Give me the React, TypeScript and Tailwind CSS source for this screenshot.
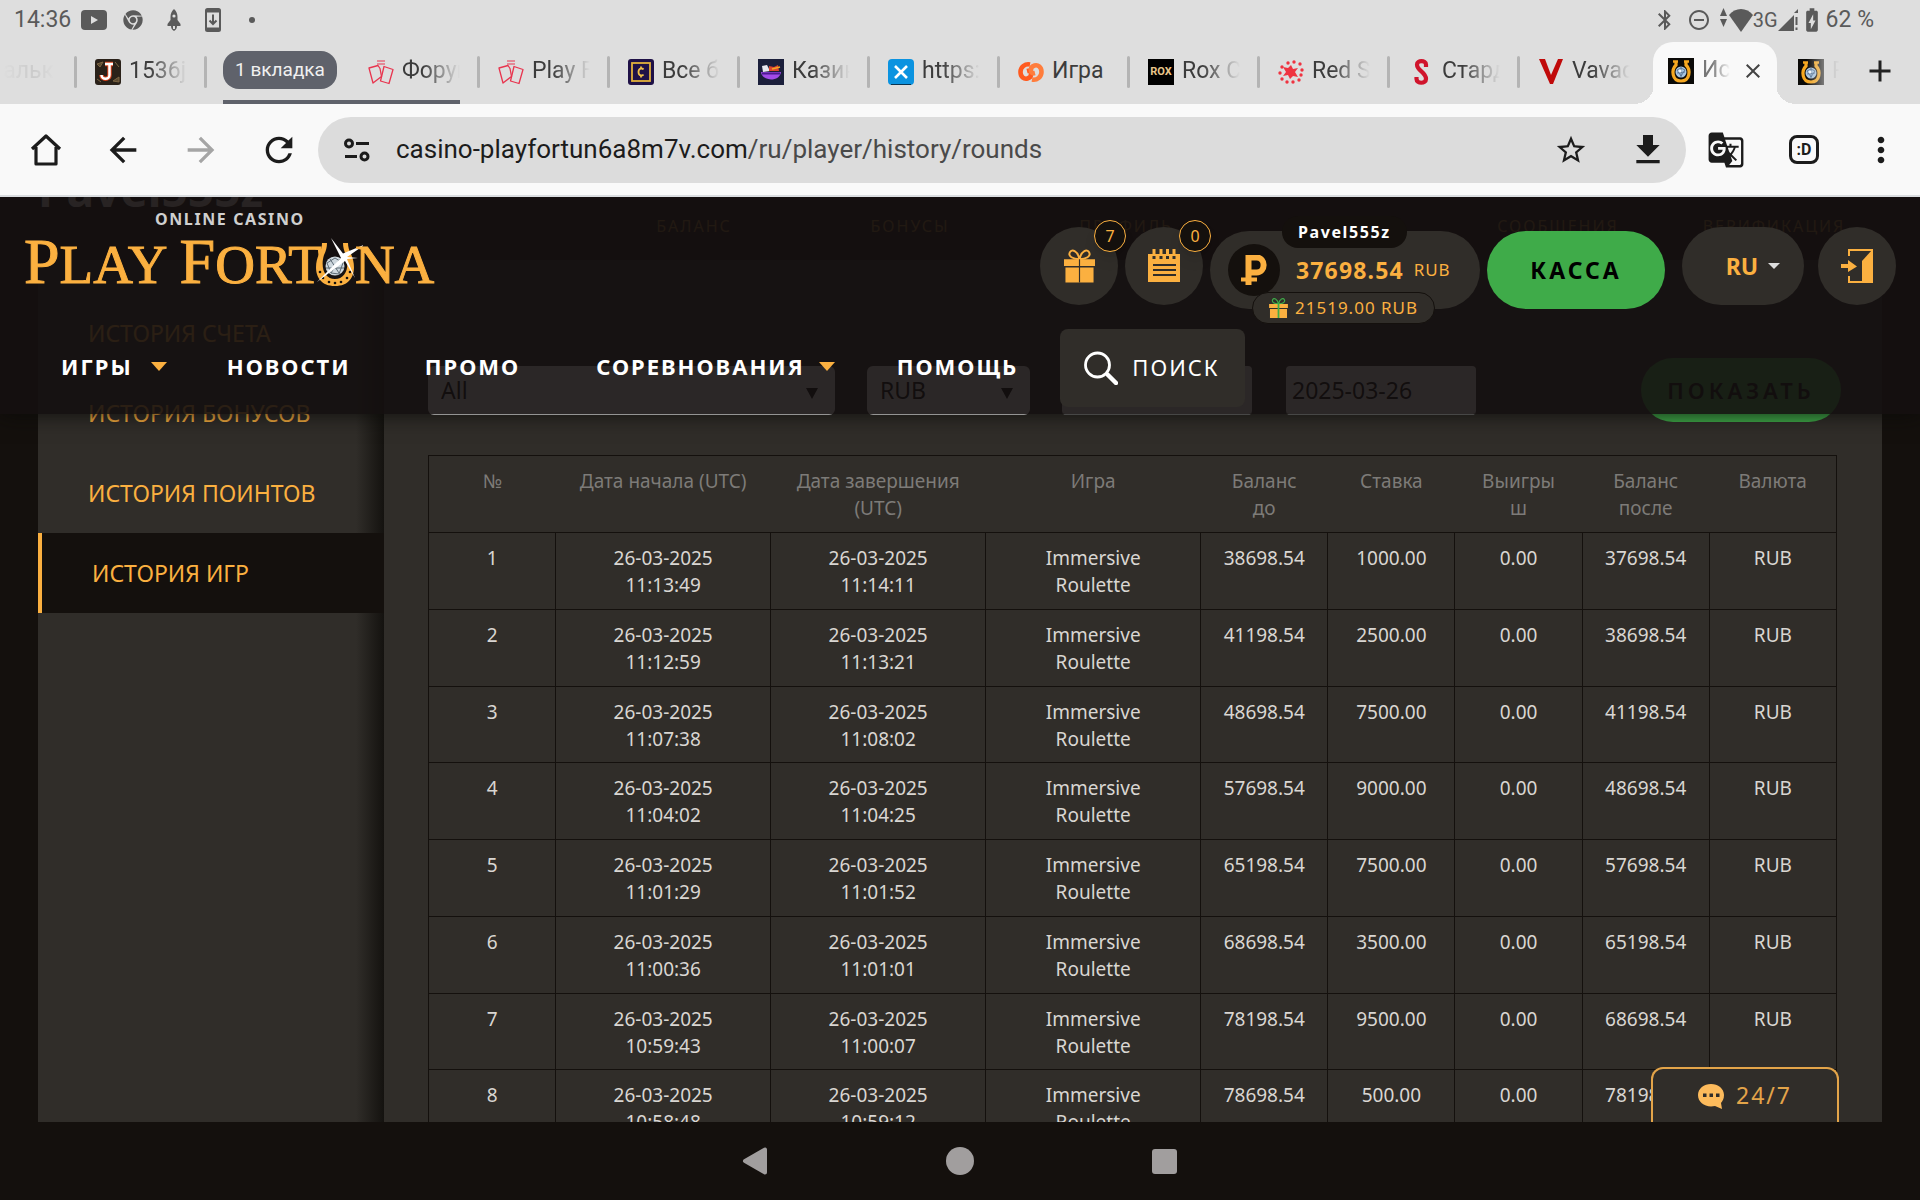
import React from "react";
import {
  MdAdd,
  MdArrowBack,
  MdArrowForward,
  MdBatteryChargingFull,
  MdBluetooth,
  MdClose,
  MdDownload,
  MdGTranslate,
  MdMoreVert,
  MdRefresh,
  MdRemoveCircleOutline,
  MdStarBorder,
} from "react-icons/md";
import { FaChrome } from "react-icons/fa";

/* ---------- Status bar ---------- */

function StatusBar() {
  return (
    <div className="flex h-10 shrink-0 items-center justify-between pl-3.5 pr-[46px] text-[23px] text-[#5a5a5a]">
      <div className="flex items-center">
        <span>14:36</span>
        <svg viewBox="0 0 26 20" className="ml-2.5 h-5 w-[26px]">
          <rect width="26" height="20" rx="4" fill="#5a5a5a" />
          <path d="M10 6l7 4-7 4z" fill="#dedede" />
        </svg>
        <FaChrome className="ml-4 size-5" />
        <svg viewBox="0 0 14 22" className="ml-6 h-[22px] w-3.5" fill="#5a5a5a">
          <path d="M7 0C9.500 2 10.500 5 10.500 8v3l3 4v2h-3.500c0 2-1 4-3 5-2-1-3-3-3-5H.5v-2l3-4V8C3.500 5 4.500 2 7 0z" />
          <circle cx="7" cy="7" r="1.600" fill="#dedede" />
          <path d="M6 17h2v3H6z" fill="#dedede" />
        </svg>
        <svg viewBox="0 0 16 24" className="ml-6 h-6 w-4" fill="none" stroke="#5a5a5a" strokeWidth="2">
          <rect x="1" y="1" width="14" height="22" rx="1.500" />
          <path d="M1 3h14M1 21h14" strokeWidth="3" />
          <path d="M8 6.500v9M4.500 12.500L8 16l3.500-3.500" />
        </svg>
        <span className="ml-7 size-1.5 rounded-full bg-[#5a5a5a]" />
      </div>
      <div className="flex items-center">
        <MdBluetooth className="mr-0.5 size-6" />
        <MdRemoveCircleOutline className="ml-2 size-6" />
        <svg viewBox="0 0 34 26" className="ml-2 h-[26px] w-[34px]" fill="#5a5a5a">
          <path d="M1 9l3.500-8L8 9zM1 12h7l-3.500 8z" />
          <path d="M10 8C16 0 28 0 34 8L22 25z" />
        </svg>
        <span className="text-[20px]">3G</span>
        <svg viewBox="0 0 20 22" className="h-[22px] w-5" fill="#5a5a5a">
          <path d="M0 22L16 6v16z" />
          <path d="M16 4L20 0v4z" />
          <path d="M16 6h4v16h-4z" fill="#dedede" />
          <path d="M17.500 8h2v8h-2zM17.500 18.500h2v2.500h-2z" />
        </svg>
        <MdBatteryChargingFull className="size-7" />
        <span>62 %</span>
      </div>
    </div>
  );
}

/* ---------- Favicons ---------- */

const box = "size-[26px] shrink-0";

const CardsIcon = () => (
  <svg viewBox="0 0 26 26" className={box} fill="none" stroke="#e8344e" strokeWidth="1.300">
    <path d="M9 2h8M9 5h8" strokeWidth="1" />
    <path d="M1 9l9-2.500 2 3 1.500 8L5 24z" strokeLinejoin="round" />
    <path d="M16 7.500l9 3-4 14-8.500-2.500z" strokeLinejoin="round" />
  </svg>
);

const HorseshoeFavicon = () => (
  <svg viewBox="0 0 26 26" className={box}>
    <rect width="26" height="26" fill="#0b0a08" />
    <path d="M5 3.500h5M16 3.500h5" stroke="#f6a821" strokeWidth="2.500" />
    <path d="M8 3v4C3 12 4 23 13 23s10-11 5-16V3" fill="none" stroke="#f6a821" strokeWidth="3.200" />
    <circle cx="13" cy="14" r="5.500" fill="#a9c6e2" />
    <path d="M9 12l4-2 4 2-4 6zM9 15l8-1M13 9v10" stroke="#4c6a8c" strokeWidth=".8" fill="none" />
    <circle cx="12" cy="13" r="1.500" fill="#f2f8ff" />
  </svg>
);

const JIcon = () => (
  <svg viewBox="0 0 26 26" className={box}>
    <rect width="26" height="26" rx="3" fill="#2a2119" />
    <path d="M2 5l6-2-3 5zM18 22l6-4v5zM20 3l4 5M2 20l4 3" stroke="#7c6543" fill="#5b4a32" />
    <path d="M10 5h8M14.500 5v11c0 5-8 5-8 0" fill="none" stroke="#d8431d" strokeWidth="4.500" />
    <path d="M10 5h8M14.500 5v11c0 5-8 5-8 0" fill="none" stroke="#fff" strokeWidth="2.500" />
  </svg>
);

const CIcon = () => (
  <svg viewBox="0 0 26 26" className={box}>
    <rect width="26" height="26" rx="3" fill="#1f1147" />
    <rect x="4" y="4" width="18" height="18" fill="none" stroke="#e2b13c" strokeWidth="1.800" />
    <path d="M15.500 10.500c-1-1.500-5-1.500-5 2.500s4 4 5 2.500M13 7.500v2M13 16.500v2" fill="none" stroke="#f0c04a" strokeWidth="1.800" />
  </svg>
);

const BowlIcon = () => (
  <svg viewBox="0 0 26 26" className={box}>
    <rect width="26" height="26" fill="#1b1f3b" />
    <path d="M4 7l5-1 3 6-7 1z" fill="#e8e8f0" />
    <path d="M11 7l5 1 4-2 1 6H11z" fill="#d9452f" />
    <path d="M14 10l8-2" stroke="#f5a623" strokeWidth="1.500" />
    <path d="M3 13h20c-1 10-19 10-20 0z" fill="#a24be8" />
    <path d="M4 14.500h18" stroke="#4b1b90" strokeWidth="2" />
  </svg>
);

const XIcon = () => (
  <svg viewBox="0 0 26 26" className={box}>
    <rect width="26" height="26" rx="4" fill="#0b93e0" />
    <path d="M7 7l12 12M19 7L7 19" stroke="#fff" strokeWidth="2.600" />
    <path d="M3 25.500h20" stroke="#0a3450" />
  </svg>
);

const LoopIcon = () => (
  <svg viewBox="0 0 26 26" className={box} fill="none" stroke="#ff5a1f" strokeWidth="4.600">
    <path d="M12 5.500C7 4.500 2.500 8 2.500 13s3.500 7.500 7 6.500 4-3 3.500-5.500-2-2.500-4-2" />
    <path d="M14 20.500c5 1 9.500-2.500 9.500-7.500S20 5.500 16.500 6.500s-4 3-3.500 5.500 2 2.500 4 2" stroke="#ff7d3c" />
  </svg>
);

const RoxIcon = () => (
  <span className="flex size-[26px] shrink-0 items-center justify-center bg-black text-[11px] font-bold text-[#e8c48a]">ROX</span>
);

const RedStarIcon = () => (
  <svg viewBox="0 0 26 26" className={box} fill="#ef3340">
    <path d="M13 6l2 4 5-1-3 4 3 5-5-1-3 3-2-4-5 1 3-4-3-5 5 1z" />
    {[
      [10, 4], [16, 3], [22, 5], [24, 11], [23, 16], [21, 21], [15, 23], [9, 23], [4, 20], [2, 14], [4, 8],
    ].map(([x, y]) => (
      <circle key={x + "-" + y} cx={x} cy={y} r="1.700" />
    ))}
  </svg>
);

const SIcon = () => (
  <svg viewBox="0 0 26 26" className={box} fill="none" stroke="#d0142c" strokeWidth="4.200">
    <path d="M18 8V5.500c0-4.500-9-4.500-9 0C9 12 18 13 18 20c0 5-9.500 5-9.500 0v-2" />
  </svg>
);

const VIcon = () => (
  <svg viewBox="0 0 26 26" className={box}>
    <path d="M1 0h6l6 16 7-16h5L15 25h-3z" fill="#c00a0a" />
  </svg>
);

/* ---------- Tab strip ---------- */

const fade = "[mask-image:linear-gradient(to_right,black_35%,transparent)]";

function Tab({ icon, label, separator = true }: { icon: React.ReactNode; label: string; separator?: boolean }) {
  return (
    <div className="flex h-full w-[130px] shrink-0 items-center pl-[18px]">
      {icon}
      <span className={"ml-2 w-[58px] overflow-hidden whitespace-nowrap pb-0.5 " + (label.length > 4 ? fade : "")}>{label}</span>
      {separator && <span className="ml-auto h-8 w-[3px] rounded-full bg-[#b4b4b4]" />}
    </div>
  );
}

function TabStrip() {
  return (
    <div className="flex h-16 shrink-0 items-center overflow-hidden text-[23px] text-[#3c3c3c]">
      <div className="flex h-full w-[77px] shrink-0 items-center justify-end">
        <span className="mr-5 pb-0.5 text-[#cacaca] [mask-image:linear-gradient(to_left,transparent,black_40%,transparent)]">альк</span>
        <span className="h-8 w-[3px] rounded-full bg-[#b4b4b4]" />
      </div>
      <Tab icon={<JIcon />} label="1536jo" />
      <div className="relative flex h-full shrink-0 items-center">
        <button className="mb-1 ml-4 mr-[13px] h-[38px] w-[114px] whitespace-nowrap rounded-2xl bg-[#5f626b] text-[19px] text-[#f0f0f0]">
          1 вкладка
        </button>
        <Tab icon={<CardsIcon />} label="Форум" />
        <span className="absolute bottom-0 left-4 right-5 h-1 bg-[#5f626b]" />
      </div>
      <Tab icon={<CardsIcon />} label="Play F" />
      <Tab icon={<CIcon />} label="Все бо" />
      <Tab icon={<BowlIcon />} label="Казин" />
      <Tab icon={<XIcon />} label="https:/" />
      <Tab icon={<LoopIcon />} label="Игра" />
      <Tab icon={<RoxIcon />} label="Rox C" />
      <Tab icon={<RedStarIcon />} label="Red S" />
      <Tab icon={<SIcon />} label="Старда" />
      <Tab icon={<VIcon />} label="Vavada" separator={false} />
      <div className="relative flex h-full w-[130px] shrink-0 items-end px-[3px]">
        <div className="flex h-[62px] w-full items-center rounded-t-[20px] bg-[#f9f9f9] pb-1 pl-[15px] pr-3">
          <HorseshoeFavicon />
          <span className={"ml-2 w-7 overflow-hidden pb-0.5 text-[#777] " + fade}>История</span>
          <button aria-label="Закрыть вкладку" className="ml-auto text-[#444]">
            <MdClose className="size-6" />
          </button>
        </div>
        <span className="absolute -left-4 bottom-0 size-5 bg-[radial-gradient(circle_at_0_0,transparent_20px,#f9f9f9_20px)]" />
        <span className="absolute -right-4 bottom-0 size-5 bg-[radial-gradient(circle_at_100%_0,transparent_20px,#f9f9f9_20px)]" />
      </div>
      <div className="flex h-full w-[66px] shrink-0 items-center overflow-hidden pl-[18px] [mask-image:linear-gradient(to_right,black_40%,transparent_90%)]">
        <HorseshoeFavicon />
        <span className="ml-2 pb-0.5 text-[#777]">Pl</span>
      </div>
      <button aria-label="Новая вкладка" className="mb-0.5 text-[#222]">
        <MdAdd className="ml-4 size-9" />
      </button>
    </div>
  );
}

/* ---------- Toolbar ---------- */

function Toolbar() {
  return (
    <div className="flex h-[93px] shrink-0 items-center border-b-2 border-[#dadde0] bg-[#f9f9f9] text-[#1c1c1c]">
      <button aria-label="Домой" className="ml-[29px]">
        <svg viewBox="0 0 34 34" className="size-[34px]" fill="none" stroke="currentColor" strokeWidth="3.200" strokeLinejoin="round">
          <path d="M3 16L17 3 31 16M7 14v17h20V14" />
        </svg>
      </button>
      <button aria-label="Назад" className="ml-10">
        <MdArrowBack className="size-10" />
      </button>
      <button aria-label="Вперёд" className="ml-[38px] text-[#a5a5a5]">
        <MdArrowForward className="size-10" />
      </button>
      <button aria-label="Обновить" className="ml-[38px]">
        <MdRefresh className="size-10" />
      </button>
      <div className="ml-[19px] flex h-[66px] min-w-0 flex-1 items-center rounded-full bg-[#dcdcdc] pl-[26px] pr-[18px]">
        <svg viewBox="0 0 26 24" className="h-6 w-[26px]" fill="none" stroke="currentColor" strokeWidth="3">
          <circle cx="5" cy="5.500" r="3.500" />
          <path d="M12 5.500h13M1 18.500h12" />
          <circle cx="20.500" cy="18.500" r="3.500" />
        </svg>
        <a href="#url" className="ml-[26px] text-[26px] text-[#4a4a4a]">
          <span className="text-[#1c1c1c]">casino-playfortun6a8m7v.com</span>/ru/player/history/rounds
        </a>
        <button aria-label="В закладки" className="ml-auto">
          <MdStarBorder className="size-[34px]" />
        </button>
        <button aria-label="Скачать" className="ml-10">
          <MdDownload className="size-10" />
        </button>
      </div>
      <button aria-label="Перевести" className="ml-[21px]">
        <MdGTranslate className="size-[38px]" />
      </button>
      <button aria-label="Вкладки" className="ml-11 flex h-[29px] w-[30px] items-center justify-center rounded-lg border-3 border-[#1c1c1c] text-base font-bold">
        :D
      </button>
      <button aria-label="Меню" className="ml-[42px] mr-[19px]">
        <MdMoreVert className="size-10" />
      </button>
    </div>
  );
}

/* ---------- Site header ---------- */

function GiftIcon({ className, accent }: { className: string; accent: string }) {
  return (
    <svg viewBox="0 0 32 34" className={className}>
      <path
        d="M16 10C9 10 4 7 6 3s8-2 10 7c2-9 8-11 10-7s-3 7-10 7z"
        fill="none"
        stroke={accent === "green" ? "#3fab49" : "#fbb040"}
        strokeWidth="2"
      />
      <path d="M0 10h32v7H0zM1.500 18.500h29V34h-29z" fill="#fbb040" />
      <path d="M16 10v24" stroke={accent === "green" ? "#3fab49" : "#302d29"} strokeWidth={accent === "green" ? 3 : 1.200} />
    </svg>
  );
}

function Logo() {
  return (
    <a href="#home" className="ml-6 flex flex-col text-[#fbb040]">
      <span className="ml-[131px] mt-3 text-base font-bold leading-5 tracking-widest text-[#cfcfcf]">ONLINE CASINO</span>
      <span className="mt-1.5 flex h-[54px] items-baseline font-['Liberation_Serif',serif] text-[55px] leading-[54px] [-webkit-text-stroke:1px_#fbb040]">
        <span>
          <span className="text-[64px]">P</span>LAY
        </span>
        <span className="ml-3">
          <span className="text-[64px]">F</span>ORT
        </span>
        <svg viewBox="0 0 54 54" className="-ml-[13px] -mr-2 h-[54px] w-[54px] self-center">
          <path
            d="M13 8h5c0 4-1 8-3 12-4 13 1 24 11 24s15-11 11-24c-2-4-3-8-3-12h5c0 4 1 7 3 11 6 13 4 32-16 32S4 32 10 19c2-4 3-7 3-11z"
            fill="#fbb040"
          />
          {[
            [11, 37], [14, 43], [20, 47], [26, 48], [32, 47], [38, 43], [41, 37],
          ].map(([x, y]) => (
            <circle key={x} cx={x} cy={y} r="1.300" fill="#14100d" />
          ))}
          <circle cx="26" cy="31" r="9.500" fill="#cfd8de" />
          <path d="M18 28l8-5 8 5-4 11-8-1zM17 33h18M21 24l9 14M31 24l-9 14" fill="none" stroke="#5d6b75" />
          <path d="M22 3l12 15.500L57 9 38 22l11 1-11 1 8 19-10-17L8 47l24-24z" fill="#fff" />
          <circle cx="35" cy="22" r="3" fill="#fff" />
        </svg>
        <span>NA</span>
      </span>
    </a>
  );
}

function RoundButton({ label, count, children }: { label: string; count?: string; children: React.ReactNode }) {
  return (
    <button aria-label={label} className="relative flex size-[78px] shrink-0 items-center justify-center rounded-full bg-[#302d29]">
      {children}
      {count && (
        <span className="absolute -right-2 -top-[7px] flex size-8 items-center justify-center rounded-full border border-[#fbb040] bg-[#14100d] text-base text-[#fbb040] shadow-lg">
          {count}
        </span>
      )}
    </button>
  );
}

function Balance() {
  return (
    <div className="relative mt-1 flex h-[78px] w-[270px] shrink-0 items-center rounded-full bg-[#302d29] pl-[18px] text-[#fbb040]">
      <span className="flex size-[52px] items-center justify-center rounded-full bg-[#14100d]">
        <svg viewBox="0 0 26 30" className="h-[30px] w-[26px]" fill="none" stroke="#fbb040">
          <path d="M7.500 30V2.500h8c9.500 0 9.500 15 0 15H7.500" strokeWidth="6" />
          <path d="M0 24.500h16" strokeWidth="4" />
        </svg>
      </span>
      <strong className="ml-4 text-[23px] tracking-wider">37698.54</strong>
      <span className="ml-2.5 text-[17px] tracking-wider">RUB</span>
      <span className="absolute -top-[15px] left-[72px] rounded-full bg-[#14100d] px-4 py-1 text-base font-bold leading-6 tracking-widest text-white">
        Pavel555z
      </span>
      <span className="absolute -bottom-[15px] left-[42px] flex h-8 items-center gap-[7px] whitespace-nowrap rounded-full border border-[#14100d] bg-[#302d29] px-4 text-[17px] tracking-[1px]">
        <GiftIcon accent="green" className="h-5 w-[19px]" />
        21519.00 RUB
      </span>
    </div>
  );
}

const Caret = () => <span className="border-x-8 border-t-9 border-x-transparent border-t-[#fbb040]" />;

function SiteHeader() {
  return (
    <header className="absolute inset-x-0 top-0 h-[217px] bg-[#141010]/90 shadow-[0_0_20px_rgba(10,10,8,0.9)]">
      <div className="flex h-[132px] items-start pr-6">
        <Logo />
        <div className="ml-auto mt-[30px] flex items-start gap-[7px]">
          <RoundButton label="Подарки" count="7">
            <GiftIcon accent="gold" className="h-[34px] w-[31px]" />
          </RoundButton>
          <RoundButton label="Календарь" count="0">
            <svg viewBox="0 0 34 34" className="size-[34px]">
              <path d="M1 5h32v28H1z" fill="#fbb040" />
              <path d="M7 0v6M14 0v6M20.500 0v6M27 0v6" stroke="#fbb040" strokeWidth="3" />
              <path d="M7 7v3M14 7v3M20.500 7v3M27 7v3" stroke="#302d29" strokeWidth="3" />
              <path d="M6 16h23M6 21h23M6 26h23" stroke="#302d29" strokeWidth="1.800" />
            </svg>
          </RoundButton>
          <Balance />
          <button className="mt-1 h-[78px] w-[178px] rounded-full bg-[#3fab49] text-[23px] font-bold tracking-[3px] text-black">КАССА</button>
          <button className="ml-2.5 flex h-[78px] w-[122px] items-center justify-center gap-2.5 rounded-full bg-[#302d29] pl-6 pr-1 text-[23px] font-bold text-[#fbb040]">
            RU
            <span className="border-x-6 border-t-6 border-x-transparent border-t-[#ddd]" />
          </button>
          <span className="ml-[7px] flex">
            <RoundButton label="Выйти">
              <svg viewBox="0 0 34 34" className="size-[34px]">
                <path d="M9 7V1h23v32H9v-6" fill="none" stroke="#fbb040" strokeWidth="2" />
                <path d="M32 1v33H22V12z" fill="#fbb040" />
                <path d="M1 15h7v-4l9 6.500L8 23v-4H1z" fill="#fbb040" />
              </svg>
            </RoundButton>
          </span>
        </div>
      </div>
      <nav className="flex h-[78px] items-center pl-[61px] text-[22px] font-bold tracking-[2px] text-white">
        <a href="#games" className="flex items-center gap-[18px] pb-1">
          ИГРЫ <Caret />
        </a>
        <a href="#news" className="ml-[60px] pb-1">НОВОСТИ</a>
        <a href="#promo" className="ml-[74px] pb-1">ПРОМО</a>
        <a href="#tournaments" className="ml-[76px] flex items-center gap-3.5 pb-1">
          СОРЕВНОВАНИЯ <Caret />
        </a>
        <a href="#help" className="ml-[62px] pb-1">ПОМОЩЬ</a>
        <button className="ml-[42px] flex h-[78px] w-[185px] items-center rounded-lg bg-[#302d29] pl-6 font-normal tracking-[2px]">
          <svg viewBox="0 0 34 34" className="size-[34px]" fill="none" stroke="#fff">
            <circle cx="13.500" cy="14" r="12" strokeWidth="2.800" />
            <path d="M24 24l8 8" strokeWidth="4.500" strokeLinecap="round" />
          </svg>
          <span className="ml-3.5 pb-0.5">ПОИСК</span>
        </button>
      </nav>
    </header>
  );
}

/* ---------- Player history ---------- */

const rounds = [
  ["11:13:49", "11:14:11", "38698.54", "1000.00", "37698.54"],
  ["11:12:59", "11:13:21", "41198.54", "2500.00", "38698.54"],
  ["11:07:38", "11:08:02", "48698.54", "7500.00", "41198.54"],
  ["11:04:02", "11:04:25", "57698.54", "9000.00", "48698.54"],
  ["11:01:29", "11:01:52", "65198.54", "7500.00", "57698.54"],
  ["11:00:36", "11:01:01", "68698.54", "3500.00", "65198.54"],
  ["10:59:43", "11:00:07", "78198.54", "9500.00", "68698.54"],
  ["10:58:48", "10:59:12", "78698.54", "500.00", "78198.54"],
];

const playerLinks = ["БАЛАНС", "БОНУСЫ", "ПРОФИЛЬ", "", "СООБЩЕНИЯ", "ВЕРИФИКАЦИЯ"];

const headings = [
  ["№"],
  ["Дата начала (UTC)"],
  ["Дата завершения", "(UTC)"],
  ["Игра"],
  ["Баланс", "до"],
  ["Ставка"],
  ["Выигры", "ш"],
  ["Баланс", "после"],
  ["Валюта"],
];

const cell = "border border-[#14100d] px-2 pb-2 pt-3";

function RoundsTable() {
  return (
    <table className="mt-[33px] h-[692px] w-full table-fixed border-collapse border border-[#14100d] text-center text-[19px] leading-[27px] text-[#d9d6d2]">
      <colgroup>
        <col />
        <col className="w-[215px]" />
        <col className="w-[215px]" />
        <col className="w-[215px]" />
        <col />
        <col />
        <col />
        <col />
        <col />
      </colgroup>
      <thead className="align-top text-[#7d7b78]">
        <tr className="h-[77px]">
          {headings.map((lines, i) => (
            <th key={i} className="pb-2 pt-3 font-normal">
              {lines[0]}
              {lines[1] && <br />}
              {lines[1]}
            </th>
          ))}
        </tr>
      </thead>
      <tbody className="align-top">
        {rounds.map(([start, end, before, bet, after], i) => (
          <tr key={start}>
            <td className={cell}>{i + 1}</td>
            <td className={cell}>26-03-2025<br />{start}</td>
            <td className={cell}>26-03-2025<br />{end}</td>
            <td className={cell}>Immersive<br />Roulette</td>
            <td className={cell}>{before}</td>
            <td className={cell}>{bet}</td>
            <td className={cell}>0.00</td>
            <td className={cell}>{after}</td>
            <td className={cell}>RUB</td>
          </tr>
        ))}
      </tbody>
    </table>
  );
}

function FilterSelect({ label, value, className }: { label: string; value: string; className: string }) {
  return (
    <div className={"relative " + className}>
      <select aria-label={label} className="h-[49px] w-full appearance-none rounded-md bg-white pl-[13px] text-black">
        <option>{value}</option>
      </select>
      <span className="pointer-events-none absolute bottom-4 right-[17px] border-x-6 border-t-11 border-x-transparent border-t-black" />
    </div>
  );
}

const dateInput = "h-[49px] w-[190px] rounded-sm border-b border-[#777] bg-white px-1.5 text-black";

function HistoryPage() {
  return (
    <div className="-mt-7 px-[38px] text-[23px]">
      <h1 className="h-10 text-[46px] font-bold leading-10 text-[#d9d6d2]">Pavel555z</h1>
      <div className="ml-auto grid h-[51px] w-[1296px] grid-cols-6 items-start pt-[5px] text-center text-base leading-6 tracking-[2px] text-[#fbb040]/60">
        {playerLinks.map((l, i) => (
          <a key={i} href="#player">{l}</a>
        ))}
      </div>
      <div className="flex min-h-[1000px] bg-[#302d29]">
        <aside className="w-[346px] shrink-0 bg-[linear-gradient(to_left,#14120f,transparent_28px)] pt-[33px] text-[#fbb040]">
          <a href="#account" className="flex h-20 items-center pl-[50px]">ИСТОРИЯ СЧЕТА</a>
          <a href="#bonuses" className="flex h-20 items-center pl-[50px]">ИСТОРИЯ БОНУСОВ</a>
          <a href="#points" className="flex h-20 items-center pl-[50px]">ИСТОРИЯ ПОИНТОВ</a>
          <a href="#rounds" className="flex h-20 items-center border-l-4 border-[#fbb040] bg-[#14100d] pl-[50px]">ИСТОРИЯ ИГР</a>
        </aside>
        <main className="min-w-0 flex-1 pl-11 pr-[45px] pt-[98px]">
          <form className="-mr-1 flex h-16 items-center">
            <FilterSelect label="Игра" value="All" className="w-[407px]" />
            <FilterSelect label="Валюта" value="RUB" className="ml-8 w-[163px]" />
            <input aria-label="С даты" className={"ml-8 " + dateInput} defaultValue="2025-03-26" />
            <input aria-label="По дату" className={"ml-[34px] " + dateInput} defaultValue="2025-03-26" />
            <button type="button" className="ml-auto h-16 w-[200px] rounded-full bg-[#3fab49] text-[22px] font-semibold tracking-[4px] text-black">ПОКАЗАТЬ</button>
          </form>
          <RoundsTable />
        </main>
      </div>
    </div>
  );
}

function ChatButton() {
  return (
    <button className="absolute bottom-0 right-[81px] flex h-[55px] w-[188px] items-center justify-center gap-3 rounded-t-xl border-2 border-b-0 border-[#e3a449] bg-[#302d29] text-[23px] tracking-[2px] text-[#e3a449]">
      <svg viewBox="0 0 26 26" className="size-[26px]">
        <path d="M13 1c7 0 13 4.500 13 11 0 4-1.500 6-3 8l1 6-7-3C8 25 0 20 0 12 0 5.500 6 1 13 1z" fill="#fdbb5c" />
        <path d="M5 10.500h3.500V14H5zM11.500 10.500H15V14h-3.500zM18 10.500h3.500V14H18z" fill="#302d29" />
      </svg>
      24/7
    </button>
  );
}

function SystemNav() {
  return (
    <div className="flex h-[78px] shrink-0 items-center justify-center bg-[#14100d] pr-0.5">
      <button aria-label="Назад">
        <svg viewBox="0 0 26 28" className="h-7 w-[26px]" fill="#a19e9e" stroke="#a19e9e" strokeWidth="4" strokeLinejoin="round">
          <path d="M3 14L23 2.500v23z" />
        </svg>
      </button>
      <button aria-label="Домой" className="mx-[178px] size-7 rounded-full bg-[#a19e9e]" />
      <button aria-label="Обзор" className="size-[25px] rounded-[3px] bg-[#a19e9e]" />
    </div>
  );
}

export default function App() {
  return (
    <div className="flex h-screen flex-col overflow-hidden bg-[#dedede] font-['Roboto',sans-serif]">
      <StatusBar />
      <TabStrip />
      <Toolbar />
      <div className="relative min-h-0 flex-1 overflow-hidden bg-[#14100d] font-['Noto_Sans',sans-serif]">
        <HistoryPage />
        <SiteHeader />
        <ChatButton />
      </div>
      <SystemNav />
    </div>
  );
}
